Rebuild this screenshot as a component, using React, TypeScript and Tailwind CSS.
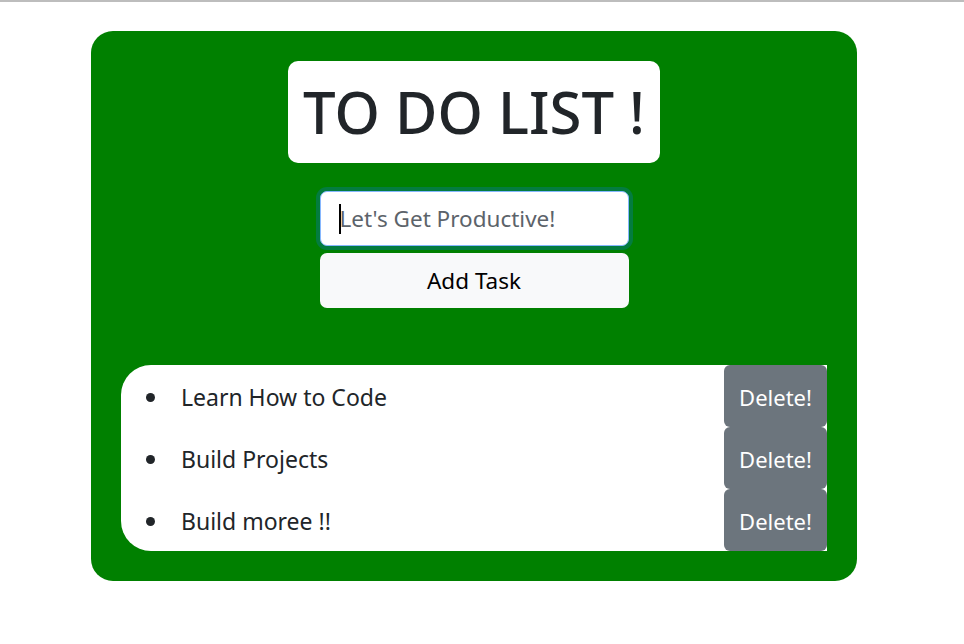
import React, { useState } from 'react';

export default function App() {
    const [tasks, setTasks] = useState<string[]>(['Learn How to Code', 'Build Projects', 'Build moree !!']);
    const [text, setText] = useState('');

    const addTask = () => {
        if (!text.trim()) return;
        setTasks([...tasks, text]);
        setText('');
    };

    const removeTask = (i: number) => setTasks(tasks.filter((_, idx) => idx !== i));

    return (
        <div className="min-h-screen bg-white border-t-2 border-[#bdbdbd] pt-[29px] font-['Noto_Sans',sans-serif]">
            <div className="ml-[91px] w-[766px] bg-[#008000] rounded-[22px] p-[30px] flex flex-col items-center">
                <div className="bg-white rounded-[10px] w-[372px] h-[102px] flex items-center justify-center">
                    <h1 className="text-[58px] font-medium text-[#212529] leading-none">TO DO LIST !</h1>
                </div>

                <div className="mt-[28px] flex flex-col gap-[7px] w-[309px]">
                    <div className="relative">
                        <input
                            value={text}
                            onChange={(e) => setText(e.target.value)}
                            placeholder="Let's Get Productive!"
                            className="h-[55px] w-full rounded-[7px] bg-white border border-[#86b7fe] shadow-[0_0_0_4px_rgba(13,110,253,0.25)] pl-[19px] pr-4 text-[22.5px] text-[#212529] placeholder:text-[#5c636a] outline-none"
                        />
                        {text === '' && <span className="absolute left-[19px] top-[13px] w-[2px] h-[30px] bg-black pointer-events-none" />}
                    </div>
                    <button onClick={addTask} className="h-[55px] w-full rounded-[7px] bg-[#f8f9fa] text-[22.5px] text-black">Add Task</button>
                </div>

                <ul className="mt-[57px] w-full bg-white rounded-l-[30px] text-[#212529]">
                    {tasks.map((t, i) => (
                        <li key={i} className="h-[62px] flex items-center">
                            <span className="ml-[25px] mt-[2px] w-[9px] h-[9px] rounded-full bg-[#212529] shrink-0" />
                            <span className="ml-[26px] pt-[3px] flex-1 text-[23px]">{t}</span>
                            <button onClick={() => removeTask(i)} className="h-full w-[103px] pt-[2px] rounded-[6px] bg-[#6c757d] text-white text-[22px]">Delete!</button>
                        </li>
                    ))}
                </ul>
            </div>
        </div>
    );
}
